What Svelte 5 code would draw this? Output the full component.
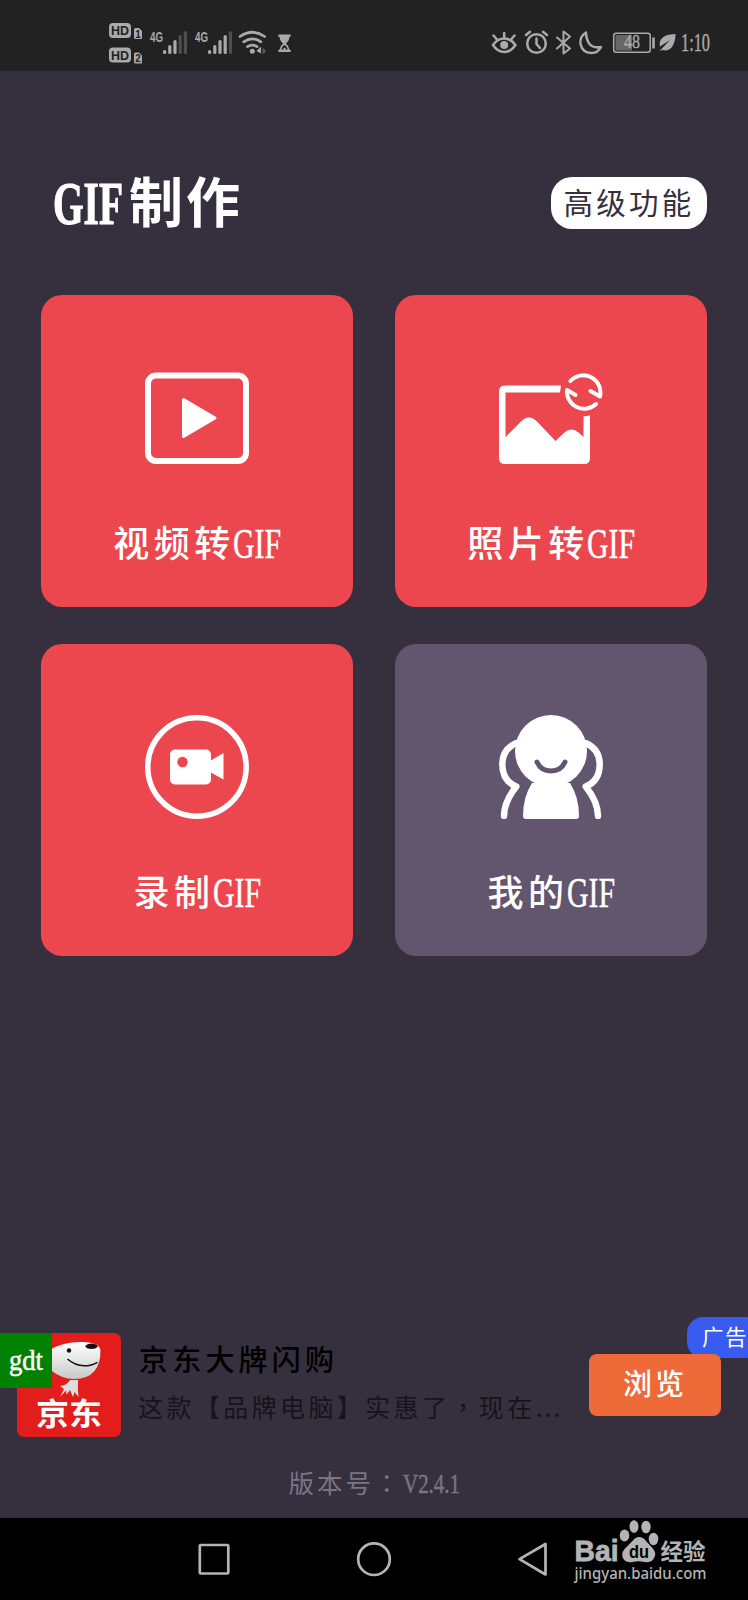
<script>
	const cards = [
		{ icon: 'video', label: '视频转' },
		{ icon: 'photo', label: '照片转' },
		{ icon: 'record', label: '录制' },
		{ icon: 'mine', label: '我的', muted: true }
	];

	// x of the first signal bar, and how many of the five are lit
	const signals = [
		{ x: 163, lit: 3 },
		{ x: 208, lit: 4 }
	];
	const bars = [4, 9, 14, 19, 23];
</script>

{#snippet narrow(text, size, width, bold = false)}
	<svg class="narrow" {width} height={size * 0.9} viewBox="0 0 {width} {size * 0.9}">
		<text
			x="0"
			y={size * 0.78}
			font-size={size}
			font-weight={bold ? 700 : 400}
			stroke-width={bold ? 1.2 : 0.5}
			textLength={width}
			lengthAdjust="spacingAndGlyphs">{text}</text>
	</svg>
{/snippet}

<div class="screen">
	<header class="status">
		<svg width="190" height="54" viewBox="105 16 190 54" fill="#aaa">
			{#each [23, 47.5] as y, i}
				<rect x="109" {y} width="22" height="15" rx="4" />
				<text class="cut" x="111" y={y + 12.2} font-size="13.500" textLength="18" lengthAdjust="spacingAndGlyphs">HD</text>
				<path d="M134 {y + 6.5}q0-1.500 1.500-1.500h3.500l3 3v8h-6.500q-1.500 0-1.500-1.500z" />
				<text class="cut" x="135.200" y={y + 14.5} font-size="10">{i + 1}</text>
			{/each}
			{#each signals as s}
				<text class="net" x={s.x - 13} y="42" font-size="15" textLength="13" lengthAdjust="spacingAndGlyphs">4G</text>
				{#each bars as h, i}
					<rect x={s.x + i * 5.2} y={54 - h} width="3.200" height={h} rx="1.600" opacity={i < s.lit ? 1 : 0.32} />
				{/each}
			{/each}
			<g fill="none" stroke="#aaa" stroke-width="2.700" stroke-linecap="round">
				<path d="M240 36.500q12.300-8.500 24.600 0M243.700 41.800q8.600-6 17.200 0M247.500 46.700q4.800-3.300 9.600 0" />
			</g>
			<circle cx="252.300" cy="51.200" r="2.500" />
			<path d="M256.500 51l4.500-4.500v7z" />
			<path d="M262.500 47.500l3.500 3.500-3.500 3.500z" opacity=".4" />
			<path d="M278.300 34.500h12.400v2.200h-1.200q-.500 4.500-3.700 6.800 3.200 2.300 3.700 6.300h1.200v2.200h-12.400v-2.200h1.200q.500-4 3.700-6.300-3.200-2.300-3.700-6.800h-1.200z" />
			<path d="M281.300 49.800q.500-3.300 3.200-5 2.700 1.700 3.200 5z" fill="#222" />
			<path d="M282.300 49.800l2.200-2.400 2.200 2.400z" />
		</svg>
		<svg class="icons" width="222" height="54" viewBox="490 16 222 54" fill="none" stroke="#aaa" stroke-width="2.500" stroke-linecap="round">
			<path d="M493 45q4.500-6.500 11.200-6.500t11.200 6.500q-4.500 7-11.200 7T493 45zM504.200 33v5M493.500 35.500l3 3.500M514.500 35.500l-3 3.500" />
			<circle cx="504.200" cy="45" r="4" fill="#aaa" stroke="none" />
			<circle cx="536.500" cy="43.500" r="9.300" />
			<path d="M536.500 38.500v5.500l3.500 4M526 35l4-3.300M547 35l-4-3.300" />
			<path d="M557 37.500l13 11-6.500 5v-22l6.500 5L557 48.500" stroke-width="2" stroke-linejoin="round" />
			<path d="M586 32.500q-6.500 4-5.500 11.500 2 9 11 9 6.500 0 9.500-6-7.500 1.500-11.500-3-3.500-5-3.500-11.500z" stroke-linejoin="round" />
			<rect x="613.700" y="33.200" width="36.500" height="19" rx="2.500" stroke-width="1.500" />
			<rect x="615.500" y="35" width="16.500" height="15.500" fill="#666" stroke="none" />
			<path d="M653.500 37.500v11" stroke-width="2.600" stroke-linecap="butt" />
			<path d="M675.500 34q-11.500 0-15 6-1.500 4-.500 6.500l10-6.500-10.500 11 3-1q6 1.500 9.500-3 3.500-5 3.500-13z" fill="#aaa" stroke="none" />
			<g fill="#aaa" stroke-width=".4" font-family="Liberation Serif, serif">
				<text x="624" y="48" font-size="19" textLength="16" lengthAdjust="spacingAndGlyphs">48</text>
				<text x="681" y="51" font-size="25" textLength="29" lengthAdjust="spacingAndGlyphs">1:10</text>
			</g>
		</svg>
	</header>

	<main>
		<div class="top">
			<h1>{@render narrow('GIF', 61, 70, true)}<span>制作</span></h1>
			<button class="pill">高级功能</button>
		</div>

		<div class="grid">
			{#each cards as card}
				<section class="card" class:muted={card.muted}>
					<svg class="icon" width="104" height="104" viewBox="0 0 104 104" fill="#fff">
						{#if card.icon === 'video'}
							<rect x="3" y="9.500" width="98" height="85.500" rx="8" fill="none" stroke="#fff" stroke-width="6" />
							<path d="M38.500 33.500L70 52 38.500 70.500z" stroke="#fff" stroke-width="3" stroke-linejoin="round" />
						{:else if card.icon === 'photo'}
							<path d="M62 19.500H6q-6 0-6 6V92q0 6 6 6h79q6 0 6-6V49.500l-6.500 1V71l-5-4.500q-7-6-14 0L56.500 75 38 55.500q-8-8-16 0L6.500 71V26.500H61z" />
							<g fill="none" stroke="#fff" stroke-width="4" stroke-linecap="round" stroke-linejoin="round">
								<path d="M71.500 15A17.200 17.200 0 0 1 101 30.500l-9.500-5.500M97 38A17.200 17.200 0 0 1 68 24l8.500 5" />
							</g>
						{:else if card.icon === 'record'}
							<circle cx="52" cy="52" r="49.200" fill="none" stroke="#fff" stroke-width="5.500" />
							<rect x="25" y="34.500" width="41" height="35" rx="5" />
							<path d="M65 46l13.500-8v26.500L65 57z" />
							<circle class="lens" cx="37.500" cy="47" r="5.200" />
						{:else}
							<circle cx="52" cy="36" r="36" />
							<path d="M33 68q-9 14-9 33 0 3 3 3h50q3 0 3-3 0-19-9-33z" />
							<path d="M38 47q4 9 14 9t14-9" fill="none" stroke="#62556e" stroke-width="5" stroke-linecap="round" />
							<g fill="none" stroke="#fff" stroke-width="6.500" stroke-linecap="round" stroke-linejoin="round">
								<path d="M17.500 28Q3.500 34 3.300 49q0 17 14 22.500Q5 87 5 101M86.500 28q14 6 14.200 21 0 17-14 22.500Q99 87 99 101" />
							</g>
						{/if}
					</svg>
					<div class="label"><span>{card.label}</span>{@render narrow('GIF', 42, 48)}</div>
				</section>
			{/each}
		</div>

		<div class="ad">
			<span class="tag">广告</span>
			<div class="logo">
				<svg width="104" height="104" viewBox="0 0 104 104">
					<defs>
						<linearGradient id="fur" x2="0" y2="1">
							<stop offset="0" stop-color="#fff" />
							<stop offset="1" stop-color="#c9c9c9" />
						</linearGradient>
					</defs>
					<path d="M33 17Q46 8.500 66 9q16 .500 17.500 8 0 14-6 21-7 8-20 8-13 0-24-9z" fill="url(#fur)" />
					<ellipse cx="74.500" cy="13.300" rx="6" ry="2.700" fill="#111" />
					<circle cx="52" cy="17.500" r="2.200" fill="#111" />
					<path d="M50.500 26q7 6.500 17 6.800 7 0 13-3.500" fill="none" stroke="#111" stroke-width="1.500" />
					<path d="M53 47h8q-.500 9 .500 17l-4-5-1.500 5-3-7-3.500 4.500-.500-4-6 6.500 4-8-4-3q7-.500 10-6z" fill="#ddd" />
					<text class="brand" x="19" y="92" font-size="31" textLength="66" lengthAdjust="spacingAndGlyphs">京东</text>
				</svg>
				<span class="gdt">{@render narrow('gdt', 29, 34)}</span>
			</div>
			<div class="copy">
				<strong>京东大牌闪购</strong>
				<p>这款【品牌电脑】实惠了<span class="centered">，</span>现在<i>...</i></p>
			</div>
			<button class="view">浏览</button>
		</div>

		<div class="version"><span>版本号<span class="centered">：</span></span>{@render narrow('V2.4.1', 28, 57)}</div>
	</main>

	<nav>
		<svg width="748" height="82" viewBox="0 0 748 82" fill="none" stroke="#b4b4b4" stroke-width="2.700" stroke-linejoin="round">
			<rect x="199.800" y="27" width="28.500" height="28.500" rx="1" />
			<circle cx="374" cy="41.200" r="15.800" />
			<path d="M519.500 41.200L545.500 26v30.500z" />
		</svg>
	</nav>

	<div class="watermark">
		<svg width="140" height="68" viewBox="570 1518 140 68" fill="#b4b4b4">
			<text x="574.500" y="1560.500" font-size="29" font-weight="700" stroke="#b4b4b4" stroke-width=".8" textLength="44" lengthAdjust="spacingAndGlyphs">Bai</text>
			<ellipse cx="624.500" cy="1535.500" rx="4.800" ry="6" />
			<ellipse cx="634" cy="1526.500" rx="4.500" ry="6.300" />
			<ellipse cx="646" cy="1527" rx="4.700" ry="6.300" />
			<ellipse cx="653.500" cy="1539" rx="4.800" ry="6.200" />
			<path d="M639 1537q4 0 7 4l6.500 7q5 6 1 11-3 4-9 3-6-1.500-12 0-6 1-9-3-3-5 1-10l8-8q3-4 6.500-4z" />
			<text class="du" x="629" y="1557.500" font-size="19" textLength="20" lengthAdjust="spacingAndGlyphs">du</text>
			<text class="cjk" x="660.500" y="1559.500" font-size="23" textLength="45" lengthAdjust="spacingAndGlyphs">经验</text>
			<text class="url" x="574.500" y="1578.500" font-size="15.500" textLength="132" lengthAdjust="spacingAndGlyphs">jingyan.baidu.com</text>
		</svg>
	</div>
</div>

<style>
	:global(body) {
		margin: 0;
		background: #362f3d;
	}

	.screen {
		position: relative;
		display: flex;
		flex-direction: column;
		width: 748px;
		height: 1600px;
		overflow: hidden;
		background: #362f3d;
		color: #fff;
		font-family: 'Liberation Serif', 'Noto Sans CJK SC', sans-serif;
	}

	svg {
		display: block;
		flex: none;
	}

	button {
		padding: 0;
		border: 0;
		color: inherit;
		font-family: 'Noto Sans CJK SC', sans-serif;
	}

	.status {
		display: flex;
		justify-content: space-between;
		box-sizing: border-box;
		height: 71px;
		padding: 16px 36px 0 105px;
		background: #222;
		font-family: 'Liberation Sans', sans-serif;
	}

	.icons {
		overflow: visible;
	}

	.cut {
		fill: #222;
		font-weight: 700;
	}

	.net {
		font-weight: 700;
	}

	.narrow {
		fill: currentColor;
		stroke: currentColor;
		overflow: visible;
		font-family: 'Liberation Serif', serif;
		letter-spacing: 0;
	}

	main {
		display: flex;
		flex-direction: column;
		height: 1447px;
	}

	.top {
		display: flex;
		align-items: center;
		justify-content: space-between;
		height: 104px;
		margin-top: 80px;
		padding: 0 41px 0 53px;
	}

	h1 {
		display: flex;
		align-items: center;
		gap: 6px;
		margin: 0;
		font: 700 54px/60px 'Noto Sans CJK SC', sans-serif;
		letter-spacing: 3px;
	}

	h1 span {
		padding-bottom: 7px;
	}

	h1 .narrow {
		margin-top: 1px;
	}

	.pill {
		width: 156px;
		height: 52px;
		padding-bottom: 5px;
		border-radius: 21px;
		background: #fff;
		color: #362f3d;
		font-size: 29.500px;
		line-height: 46px;
		letter-spacing: 3.300px;
	}

	.grid {
		display: grid;
		grid-template-columns: repeat(2, 312px);
		gap: 37px 42px;
		margin: 40px 0 0 41px;
	}

	.card {
		display: flex;
		flex-direction: column;
		align-items: center;
		box-sizing: border-box;
		height: 312px;
		padding-top: 71px;
		border-radius: 21px;
		background: #ec474f;
	}

	.card.muted {
		background: #62556e;
	}

	.lens {
		fill: #ec474f;
	}

	.label {
		display: flex;
		align-items: center;
		height: 50px;
		margin-top: 46px;
		font: 500 36px/50px 'Noto Sans CJK SC', sans-serif;
		letter-spacing: 4.500px;
	}

	.label .narrow {
		margin: 6px 0 0 -2px;
	}

	.ad {
		position: relative;
		display: flex;
		height: 104px;
		margin-top: 377px;
		padding-left: 17px;
		color: #000;
	}

	.tag {
		position: absolute;
		left: 687px;
		top: -16px;
		box-sizing: border-box;
		width: 74px;
		height: 41px;
		padding-left: 15px;
		border-radius: 16px;
		background: #385cf0;
		color: #fff;
		font: 400 21.500px/37px 'Noto Sans CJK SC', sans-serif;
		letter-spacing: 1.500px;
		white-space: nowrap;
	}

	.logo {
		position: relative;
		flex: none;
		width: 104px;
		border-radius: 7px;
		background: #e21d1c;
	}

	.brand {
		fill: #fff;
		font-family: 'Noto Sans CJK SC', sans-serif;
		font-weight: 700;
	}

	.gdt {
		position: absolute;
		left: -17px;
		top: 0;
		display: flex;
		align-items: center;
		justify-content: center;
		width: 52px;
		height: 55px;
		background: #008200;
		color: #fff;
	}

	.copy {
		width: 451px;
		padding: 7px 0 0 17px;
		font-family: 'Noto Sans CJK SC', sans-serif;
		white-space: nowrap;
	}

	strong {
		display: block;
		padding-left: 1px;
		font-size: 29px;
		font-weight: 500;
		line-height: 36px;
		letter-spacing: 4.200px;
	}

	p {
		margin: 13px 0 0;
		color: #17131b;
		font-size: 25px;
		line-height: 34px;
		letter-spacing: 3.400px;
	}

	p i {
		font-style: normal;
		letter-spacing: 2px;
	}

	/* full-width punctuation that sits in the middle of its cell */
	.centered {
		font-family: 'Noto Sans CJK TC', sans-serif;
	}

	.view {
		position: relative;
		width: 132px;
		height: 62px;
		margin-top: 21px;
		padding-bottom: 5px;
		border-radius: 8px;
		background: #ee6a39;
		color: #fff;
		font-size: 29px;
		font-weight: 500;
		line-height: 57px;
		letter-spacing: 3px;
	}

	.version {
		display: flex;
		align-items: center;
		justify-content: center;
		height: 34px;
		margin-top: 28px;
		color: #7b7484;
		font: 400 25.500px/34px 'Noto Sans CJK SC', sans-serif;
		letter-spacing: 3px;
	}

	.version .narrow {
		margin-top: 3px;
	}

	nav {
		height: 82px;
		background: #000;
	}

	.watermark {
		position: absolute;
		left: 570px;
		top: 1518px;
		font-family: 'Liberation Sans', sans-serif;
	}

	.du {
		fill: #000;
		font-weight: 700;
	}

	.cjk {
		font-family: 'Noto Sans CJK SC', sans-serif;
		font-weight: 700;
	}

	.url {
		font-family: 'Noto Sans', sans-serif;
		font-weight: 500;
	}
</style>
